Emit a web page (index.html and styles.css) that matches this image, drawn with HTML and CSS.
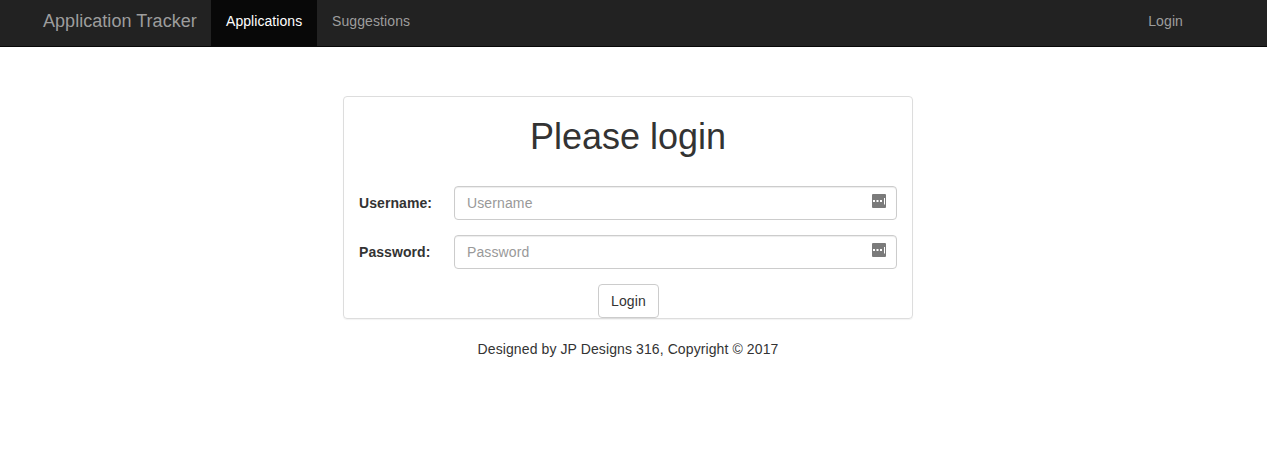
FILE: index.html
```html
<!DOCTYPE html>
<html lang="en">
<head>
<meta charset="utf-8">
<title>Application Tracker</title>
<link rel="stylesheet" href="styles.css">
</head>
<body>
<nav class="navbar">
  <a class="brand">Application Tracker</a>
  <a class="nav-link active">Applications</a>
  <a class="nav-link">Suggestions</a>
  <a class="nav-link login-link">Login</a>
</nav>
<main class="main">
  <form class="panel">
    <h1 class="title">Please login</h1>
    <div class="row">
      <label class="label" for="user">Username:</label>
      <div class="field">
        <input class="input" id="user" type="text" placeholder="Username">
        <svg class="key-icon" viewBox="0 0 14 14"><rect width="14" height="14" rx="1" fill="#7b7b7b"/><path d="M1 6h2v2h-2zM4.5 6h2v2h-2zM8 6h2v2h-2zM12 4h1v6.5h-1z" fill="#fff"/></svg>
      </div>
    </div>
    <div class="row">
      <label class="label" for="pass">Password:</label>
      <div class="field">
        <input class="input" id="pass" type="password" placeholder="Password">
        <svg class="key-icon" viewBox="0 0 14 14"><rect width="14" height="14" rx="1" fill="#7b7b7b"/><path d="M1 6h2v2h-2zM4.5 6h2v2h-2zM8 6h2v2h-2zM12 4h1v6.5h-1z" fill="#fff"/></svg>
      </div>
    </div>
    <button class="button" type="button">Login</button>
  </form>
  <footer class="footer">Designed by JP Designs 316, Copyright © 2017</footer>
</main>
</body>
</html>
```

FILE: styles.css
```css
* { box-sizing: border-box; }
body {
  margin: 0;
  background: #fff;
  color: #333;
  font: 14px/20px "Liberation Sans", Arial, sans-serif;
  letter-spacing: .1px;
}
.navbar {
  display: flex;
  height: 47px;
  padding: 0 69px 0 28px;
  background: #222;
  border-bottom: 1px solid #080808;
  color: #9d9d9d;
}
.brand { width: 183px; padding: 11px 0 0 15px; font-size: 18px; letter-spacing: .04px; }
.nav-link { padding: 11px 15px 0; letter-spacing: .1px; }
.active { width: 106px; padding-right: 0; background: #080808; color: #fff; letter-spacing: .06px; }
.login-link { margin-left: auto; }
.main { width: 570px; margin: 49px 0 0 343px; }
.panel {
  height: 223px;
  padding: 0 15px;
  border: 1px solid #ddd;
  border-radius: 4px;
  box-shadow: 0 1px 1px rgba(0, 0, 0, .05);
}
.title {
  margin: 20px 0 29px;
  font-size: 36px;
  font-weight: 500;
  line-height: 40px;
  letter-spacing: 0;
  text-align: center;
}
.row { display: flex; align-items: center; height: 34px; margin-bottom: 15px; }
.label { width: 95px; font-weight: 700; letter-spacing: .07px; }
.field { position: relative; flex: 1; }
.input {
  display: block;
  width: 100%;
  height: 34px;
  padding: 6px 12px;
  border: 1px solid #ccc;
  border-radius: 4px;
  box-shadow: inset 0 1px 1px rgba(0, 0, 0, .075);
  font: inherit;
  letter-spacing: .12px;
}
.input::placeholder { color: #999; }
.key-icon { position: absolute; top: 8px; right: 11px; width: 14px; height: 14px; }
.button {
  display: block;
  width: 61px;
  height: 34px;
  margin: 0 0 0 239px;
  padding: 6px 12px;
  border: 1px solid #ccc;
  border-radius: 4px;
  background: #fff;
  color: #333;
  font: inherit;
  letter-spacing: .12px;
}
.footer { margin-top: 20px; text-align: center; }
```
